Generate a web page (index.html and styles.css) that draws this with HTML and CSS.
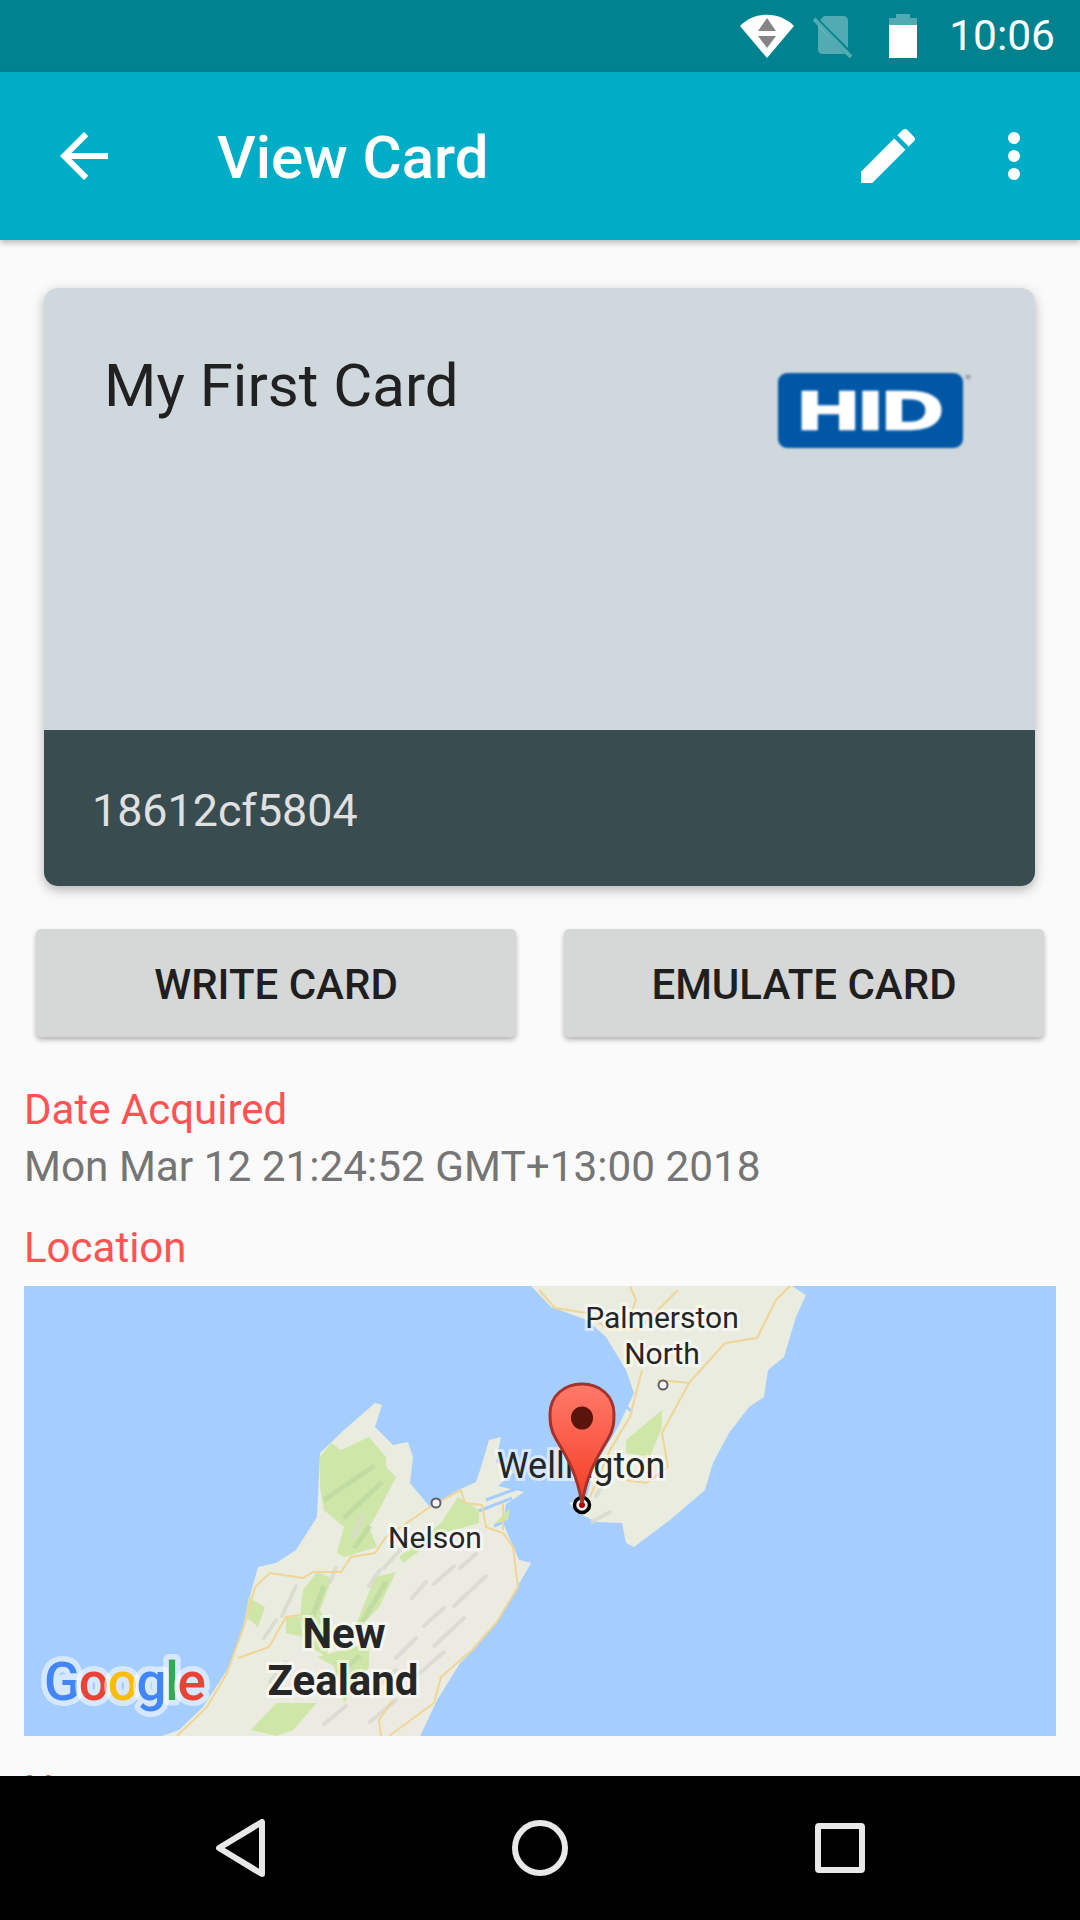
FILE: index.html
```html
<!DOCTYPE html>
<html lang="en">
<head>
    <meta charset="UTF-8">
    <meta name="viewport" content="width=device-width, initial-scale=1.0">
    <title>View Card</title>
    <link rel="stylesheet" href="styles.css">
</head>
<body>
    <div class="app">
        <div class="status-bar">
            <svg class="status-wifi" width="54" height="44" viewBox="0 0 54 44">
                <path class="white" d="M0 12 C15 -3 39 -3 54 12 L27 44 Z"/>
                <path class="grey" d="M27 4 L36 17 H18 Z M18 22 H36 L27 34 Z"/>
            </svg>
            <svg class="status-sim" width="40" height="44" viewBox="0 0 40 44">
                <path class="faded" d="M7 6 L11 2 H30 Q35 2 35 7 V34 Z M5 11 L32 40 H10 Q5 40 5 35 Z"/>
                <path class="faded-line" d="M1 5 L38 43"/>
            </svg>
            <svg class="status-battery" width="28" height="44" viewBox="0 0 28 44">
                <path class="faded" d="M7 0 H21 V4 H28 V11 H0 V4 H7 Z"/>
                <rect class="white" x="0" y="11" width="28" height="33"/>
            </svg>
            <span class="status-time">10:06</span>
        </div>

        <header class="toolbar">
            <svg class="icon-back" width="72" height="72" viewBox="0 0 24 24">
                <path class="white" d="M20 11H7.83l5.59-5.59L12 4l-8 8 8 8 1.41-1.41L7.83 13H20v-2z"/>
            </svg>
            <h1 class="toolbar-title">View Card</h1>
            <svg class="icon-edit" width="72" height="72" viewBox="0 0 24 24">
                <path class="white" d="M3 17.25V21h3.75L17.81 9.94l-3.75-3.75L3 17.25zM20.71 7.04c.39-.39.39-1.02 0-1.41l-2.34-2.34c-.39-.39-1.02-.39-1.41 0l-1.83 1.83 3.75 3.75 1.83-1.83z"/>
            </svg>
            <svg class="icon-more" width="12" height="48" viewBox="0 0 12 48">
                <circle class="white" cx="6" cy="6" r="6"/>
                <circle class="white" cx="6" cy="24" r="6"/>
                <circle class="white" cx="6" cy="42" r="6"/>
            </svg>
        </header>

        <main class="content">
            <section class="card">
                <div class="card-top">
                    <h2 class="card-name">My First Card</h2>
                    <svg class="hid-logo" width="196" height="80" viewBox="0 0 196 80">
                        <rect class="hid-box" x="0" y="1" width="185" height="75" rx="9"/>
                        <text class="hid-text" x="20" y="57" textLength="145" lengthAdjust="spacingAndGlyphs">HID</text>
                        <circle class="hid-mark" cx="190" cy="5" r="2.5"/>
                    </svg>
                </div>
                <div class="card-bottom">18612cf5804</div>
            </section>

            <div class="actions">
                <button class="action-btn">WRITE CARD</button>
                <button class="action-btn">EMULATE CARD</button>
            </div>

            <div class="details">
                <div class="label">Date Acquired</div>
                <div class="value">Mon Mar 12 21:24:52 GMT+13:00 2018</div>
                <div class="label label-location">Location</div>

                <svg class="map" width="1032" height="450" viewBox="0 0 1032 450">
                    <!-- land -->
                    <polygon class="land" points="138,450 155,444 179,421 203,384 217,351 224,317 234,281 252,277 272,264 293,231 296,167 320,144 351,117 358,119 351,141 369,159 384,156 389,171 386,197 406,221 434,204 452,196 458,178 465,154 477,151 472,176 490,186 474,200 500,206 482,218 479,237 495,274 507,277 487,311 472,337 452,361 436,377 413,414 396,450"/>
                    <polygon class="land-beige" points="230,450 262,372 345,340 400,262 462,241 479,247 495,274 507,277 487,311 472,337 452,361 436,377 413,414 396,450"/>
                    <polygon class="land" points="507,0 527,21 563,34 582,51 602,84 610,107 594,141 570,181 563,211 545,217 555,227 572,236 598,237 602,257 610,261 646,234 681,204 689,177 705,147 725,121 740,111 744,84 760,71 772,31 782,9 768,0"/>

                    <!-- sounds between the land -->
                    <path class="water-line" d="M462 214 L500 200 M452 226 L488 212 M470 240 L490 232 M322 190 L330 196 M600 118 L608 126"/>

                    <!-- parks -->
                    <polygon class="park" points="296,171 307,157 317,164 345,151 362,171 362,181 372,191 355,224 345,241 353,261 320,271 313,267 320,241 300,224 296,201"/>
                    <polygon class="park" points="417,237 434,211 455,224 455,237 420,247 379,277 375,271"/>
                    <polygon class="park" points="279,304 293,286 308,292 296,324 307,344 303,371 286,361 276,331"/>
                    <polygon class="park" points="338,324 351,291 372,286 355,321 327,351"/>
                    <polygon class="park" points="224,311 241,321 234,341 222,331"/>
                    <polygon class="park" points="227,444 252,417 293,417 269,444 252,450"/>
                    <polygon class="park" points="262,331 276,331 279,351 262,347"/>
                    <polygon class="park" points="293,371 345,357 345,381 320,417 310,380"/>
                    <polygon class="park" points="602,154 638,124 638,141 626,171 602,167"/>
                    <polygon class="park" points="470,238 486,222 484,234"/>

                    <!-- park shading -->
                    <path class="park-shade" d="M300 214 L350 180 M320 232 L358 196 M330 262 L346 240 M285 340 L300 300 M336 340 L362 296 M300 398 L336 370"/>

                    <!-- ridges -->
                    <path class="ridge" d="M388 312 L402 296 M410 298 L430 280 M436 282 L452 268 M400 340 L420 322 M430 320 L462 290 M372 372 L392 352 M410 360 L440 332 M352 402 L372 384 M392 390 L420 366 M338 230 L330 250 M312 282 L306 296 M258 330 L272 300 M240 352 L252 334 M360 282 L378 262 M392 262 L404 248 M345 300 L356 284 M246 396 L262 376 M300 438 L322 420 M346 436 L372 414 M586 226 L568 236 M578 200 L572 210"/>

                    <!-- roads -->
                    <polyline class="road" points="153,450 183,421 203,387 221,337 231,301 246,287 279,292 289,286 317,286 327,271 351,267 362,251 406,221 437,204 441,217 458,219 462,241 479,247 489,261 494,301 472,337 448,364 417,391 410,417 365,450"/>
                    <polyline class="road" points="214,372 245,361 262,331 276,329"/>
                    <polyline class="road" points="369,414 355,434 357,450"/>
                    <polyline class="road" points="479,217 479,244"/>
                    <polyline class="road" points="515,4 531,22 563,27 582,42 614,44 654,4"/>
                    <polyline class="road" points="606,0 612,14 602,41"/>
                    <polyline class="road" points="618,84 606,131 586,164 566,211"/>
                    <polyline class="road" points="665,97 638,147 644,181 622,197 602,194"/>
                    <polyline class="road" points="634,94 665,97 701,57 733,52 752,14 766,0"/>

                    <!-- towns -->
                    <circle class="town" cx="639" cy="99" r="4.5"/>
                    <circle class="town" cx="412" cy="217" r="4.5"/>
                    <text class="map-label" x="638" y="42">Palmerston</text>
                    <text class="map-label" x="638" y="78">North</text>
                    <text class="map-label map-label-wellington" x="557" y="192">Wellington</text>
                    <text class="map-label" x="411" y="262">Nelson</text>
                    <text class="map-label map-label-big" x="320" y="362">New</text>
                    <text class="map-label map-label-big" x="319" y="409">Zealand</text>

                    <!-- google logo -->
                    <text class="google" x="20" y="414" textLength="162"><tspan class="g-blue">G</tspan><tspan class="g-red">o</tspan><tspan class="g-yellow">o</tspan><tspan class="g-blue">g</tspan><tspan class="g-green">l</tspan><tspan class="g-red">e</tspan></text>

                    <!-- marker -->
                    <defs>
                        <linearGradient id="pin-fill" x1="0" y1="0" x2="0" y2="1">
                            <stop offset="0" stop-color="#ff7a6a"/>
                            <stop offset="1" stop-color="#f53d25"/>
                        </linearGradient>
                    </defs>
                    <circle class="pin-ring" cx="558" cy="219" r="7.5"/>
                    <circle class="pin-dot" cx="558" cy="219" r="3"/>
                    <path class="pin" d="M558 217 C553 190 546 176 532 153 C526 143 526 135 526 128 C526 110 540 98 558 98 C576 98 590 110 590 128 C590 135 590 143 584 153 C570 176 563 190 558 217 Z"/>
                    <ellipse class="pin-hole" cx="558" cy="132" rx="11" ry="11.5"/>
                </svg>

                <div class="label label-next">Name</div>
            </div>
        </main>

        <nav class="nav-bar">
            <svg width="54" height="62" viewBox="0 0 54 62">
                <path class="nav-shape" d="M49 5 V57 L6 31 Z"/>
            </svg>
            <svg width="62" height="62" viewBox="0 0 62 62">
                <circle class="nav-shape" cx="31" cy="31" r="25"/>
            </svg>
            <svg width="56" height="56" viewBox="0 0 56 56">
                <rect class="nav-shape" x="6" y="6" width="44" height="44" rx="1"/>
            </svg>
        </nav>
    </div>
</body>
</html>
```

FILE: styles.css
```css
* {
    box-sizing: border-box;
}
body {
    margin: 0;
    padding: 0;
    font-family: Roboto, "Liberation Sans", sans-serif;
    background-color: #fafafa;
}
.app {
    width: 1080px;
    height: 1920px;
    display: flex;
    flex-direction: column;
    overflow: hidden;
}

/* status bar */
.status-bar {
    height: 72px;
    flex: none;
    background-color: #00838f;
    display: flex;
    align-items: center;
    padding-right: 25px;
    justify-content: flex-end;
    color: #fff;
}
.status-wifi {
    margin-right: 19px;
}
.status-sim {
    margin-right: 36px;
}
.status-battery {
    margin-right: 32px;
}
.status-time {
    font-size: 42.5px;
    line-height: 72px;
}
.white {
    fill: #fff;
}
.grey {
    fill: #858585;
}
.faded {
    fill: #fff;
    fill-opacity: 0.32;
}
.faded-line {
    stroke: #fff;
    stroke-opacity: 0.32;
    stroke-width: 4;
    fill: none;
}

/* toolbar */
.toolbar {
    height: 168px;
    flex: none;
    background-color: #00adc7;
    display: flex;
    align-items: center;
    padding-left: 48px;
    padding-right: 60px;
    box-shadow: 0 3px 6px rgba(0, 0, 0, 0.25);
    position: relative;
}
.toolbar-title {
    margin: 2px 0 0 97px;
    flex: 1;
    color: #fff;
    font-size: 60px;
    font-weight: 500;
}
.icon-edit {
    margin-right: 84px;
}

/* card */
.content {
    flex: 1;
    min-height: 0;
    overflow: hidden;
}
.card {
    margin: 48px 45px 0 44px;
    height: 598px;
    border-radius: 14px;
    overflow: hidden;
    display: flex;
    flex-direction: column;
    box-shadow: 0 4px 12px rgba(0, 0, 0, 0.28);
}
.card-top {
    height: 442px;
    flex: none;
    background-color: #cfd8dc;
    display: flex;
    justify-content: space-between;
    align-items: flex-start;
    padding: 0 61px 0 60px;
}
.card-name {
    margin: 65px 0 0;
    font-size: 60px;
    font-weight: 400;
    line-height: 66px;
    color: #212121;
}
.hid-logo {
    margin-top: 84px;
    filter: blur(1px);
}
.hid-box {
    fill: #0057a6;
}
.hid-text {
    fill: #fff;
    stroke: #fff;
    stroke-width: 2.5;
    font-family: "Liberation Sans", sans-serif;
    font-weight: 700;
    font-size: 53px;
}
.hid-mark {
    fill: #9aa5ad;
}
.card-bottom {
    flex: 1;
    background-color: #394c50;
    color: #e0e0e0;
    font-size: 44.8px;
    padding: 55px 0 0 48px;
    line-height: 52px;
}

/* buttons */
.actions {
    display: grid;
    grid-template-columns: 480px 480px;
    justify-content: space-between;
    margin: 43px 36px 0;
}
.action-btn {
    height: 108px;
    border: none;
    border-radius: 5px;
    background-color: #d6d7d7;
    color: #1f1f1f;
    font-family: Roboto, sans-serif;
    font-size: 42px;
    font-weight: 500;
    padding: 2px 0 0;
    box-shadow: 0 3px 5px rgba(0, 0, 0, 0.28);
}

/* details */
.details {
    padding: 48px 24px 0;
}
.label {
    font-size: 42px;
    line-height: 50px;
    color: #ff5252;
}
.value {
    font-size: 42.3px;
    line-height: 50px;
    margin-top: 7px;
    color: #757575;
}
.label-location {
    margin-top: 31px;
    margin-bottom: 13px;
}
.label-next {
    margin-top: 30px;
}

/* map */
.map {
    display: block;
    background-color: #a5cdfe;
}
.land {
    fill: #e9ecdf;
}
.land-beige {
    fill: #ecebe2;
}
.water-line {
    fill: none;
    stroke: #a5cdfe;
    stroke-width: 3;
}
.park {
    fill: #cfe6a9;
}
.park-shade {
    fill: none;
    stroke: #bbd79c;
    stroke-width: 5;
    stroke-opacity: 0.7;
}
.ridge {
    fill: none;
    stroke: #d8d8cf;
    stroke-width: 4;
    stroke-linecap: round;
    stroke-opacity: 0.8;
}
.road {
    fill: none;
    stroke: #efd596;
    stroke-width: 2;
}
.town {
    fill: #f4f4f8;
    stroke: #5f5f66;
    stroke-width: 2;
}
.map-label {
    font-family: Roboto, sans-serif;
    font-size: 30px;
    fill: #262626;
    text-anchor: middle;
    paint-order: stroke;
    stroke: rgba(255, 255, 255, 0.55);
    stroke-width: 6;
}
.map-label-wellington {
    font-size: 36px;
}
.map-label-big {
    font-size: 42px;
    font-weight: 700;
}
.google {
    font-family: Roboto, sans-serif;
    font-size: 53px;
    font-weight: 500;
    paint-order: stroke;
    stroke: rgba(255, 255, 255, 0.55);
    stroke-width: 11;
    stroke-linejoin: round;
}
.g-blue {
    fill: #4285f4;
}
.g-red {
    fill: #ea4335;
}
.g-yellow {
    fill: #fbbc05;
}
.g-green {
    fill: #34a853;
}
.pin {
    fill: url(#pin-fill);
    stroke: #a5322a;
    stroke-width: 3;
}
.pin-hole {
    fill: #5a140c;
}
.pin-ring {
    fill: #eee;
    stroke: #000;
    stroke-width: 3.5;
}
.pin-dot {
    fill: #a00;
}

/* nav */
.nav-bar {
    height: 144px;
    flex: none;
    background-color: #000;
    display: grid;
    grid-template-columns: 1fr 1fr 1fr;
    align-items: center;
    justify-items: center;
    padding: 0 90px;
    position: relative;
}
.nav-shape {
    fill: none;
    stroke: #e8e8e8;
    stroke-width: 6;
    stroke-linejoin: round;
}
```
